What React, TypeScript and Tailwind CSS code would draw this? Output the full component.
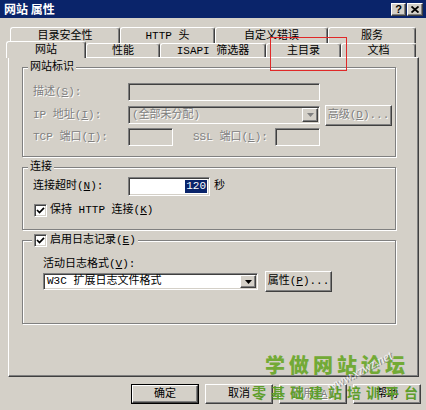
import React from "react";

const raised =
  "bg-[#d4d0c8] border border-t-white border-l-white border-r-[#404040] border-b-[#404040] shadow-[inset_-1px_-1px_0_#808080]";
const sunken =
  "border border-t-[#808080] border-l-[#808080] border-r-white border-b-white shadow-[inset_1px_1px_0_#404040,inset_-1px_-1px_0_#d4d0c8]";
const off = "text-[#808080] [text-shadow:1px_1px_0_#fff]";
const tabBase =
  "flex justify-center leading-[14px] border-t border-l border-r border-t-white border-l-white border-r-[#404040] rounded-t-[3px] shadow-[inset_-1px_0_0_#808080] whitespace-nowrap";
const group =
  "ml-[13px] w-[374px] p-0 border border-[#808080] shadow-[inset_1px_1px_0_#fff,1px_1px_0_#fff]";

function K({ k }: { k: string }) {
  return (
    <>
      (<span className="underline underline-offset-[1px]">{k}</span>)
    </>
  );
}

function Check() {
  return (
    <div className={`w-[13px] h-[13px] bg-white flex items-center justify-center shrink-0 ${sunken}`}>
      <svg width="9" height="9" viewBox="0 0 9 9">
        <path d="M1 4 L3.5 6.5 L8 1.8" fill="none" stroke="#000" strokeWidth="1.7" />
      </svg>
    </div>
  );
}

function Arrow({ disabled }: { disabled?: boolean }) {
  return (
    <div className={`w-[16px] h-full flex items-center justify-center ${raised}`}>
      <svg width="7" height="4" viewBox="0 0 7 4">
        <path d="M0 0H7L3.5 4Z" fill={disabled ? "#808080" : "#000"} />
      </svg>
    </div>
  );
}

function Btn({ children, className = "" }: { children: React.ReactNode; className?: string }) {
  return <div className={`flex items-center justify-center ${raised} ${className}`}>{children}</div>;
}

function Tab({ children, className }: { children: React.ReactNode; className: string }) {
  return <div className={`${tabBase} ${className}`}>{children}</div>;
}

export default function App() {
  return (
    <div className="relative w-[426px] h-[410px] overflow-hidden bg-[#d4d0c8] text-[11px] text-black font-['Liberation_Mono','Noto_Sans_CJK_SC',monospace]">
      {/* title bar */}
      <div className="h-[18px] bg-[#0a246a] flex items-center justify-between pl-[4px] pr-[3px]">
        <span className="text-white font-bold text-[12px] leading-[14px] font-['Noto_Sans_CJK_SC',sans-serif]">
          网站 属性
        </span>
        <div className="flex gap-[1px] mt-[1px]">
          <Btn className="w-[15px] h-[13px]">
            <span className="font-bold text-[11px] leading-[11px] font-['Liberation_Sans',sans-serif]">?</span>
          </Btn>
          <Btn className="w-[16px] h-[13px]">
            <svg width="8" height="7" viewBox="0 0 8 7">
              <path d="M0.5 0.5L7.5 6.5M7.5 0.5L0.5 6.5" stroke="#000" strokeWidth="1.8" />
            </svg>
          </Btn>
        </div>
      </div>

      {/* tabs back row */}
      <div className="flex ml-[10px] mt-[9px] h-[16px]">
        <Tab className="w-[110px] h-full pt-[1px]">目录安全性</Tab>
        <Tab className="w-[95px] h-full pt-[1px]">HTTP 头</Tab>
        <Tab className="w-[113px] h-full pt-[1px]">自定义错误</Tab>
        <Tab className="w-[88px] h-full pt-[1px]">服务</Tab>
      </div>
      {/* tabs front row */}
      <div className="flex items-start ml-[8px] h-[14px]">
        <Tab className="relative z-10 -ml-[2px] -mt-[2px] w-[80px] h-[17px] bg-[#d4d0c8] pt-[1px]">网站</Tab>
        <Tab className="w-[74px] h-[14px] items-center">性能</Tab>
        <Tab className="w-[106px] h-[14px] items-center">ISAPI 筛选器</Tab>
        <Tab className="w-[75px] h-[14px] items-center">主目录</Tab>
        <Tab className="w-[75px] h-[14px] items-center">文档</Tab>
      </div>

      {/* panel */}
      <div className="ml-[8px] w-[411px] h-[320px] border border-t-white border-l-white border-r-[#404040] border-b-[#404040] shadow-[inset_-1px_-1px_0_#808080] flex flex-col">
        {/* 网站标识 */}
        <fieldset className={`${group} mt-[2px]`}>
          <legend className="ml-[5px] px-[2px] leading-[14px] bg-[#d4d0c8]">网站标识</legend>
          <div className="pl-[10px] pt-[9px] pb-[10px] flex flex-col">
            <div className="flex items-center h-[18px]">
              <span className={`w-[95px] ${off}`}>
                描述<K k="S" />:
              </span>
              <div className={`w-[192px] h-[18px] bg-[#d4d0c8] ${sunken}`} />
            </div>
            <div className="flex items-center h-[18px] mt-[5px]">
              <span className={`w-[95px] ${off}`}>
                IP 地址<K k="I" />:
              </span>
              <div className={`w-[192px] h-[18px] bg-[#d4d0c8] p-[1px] flex ${sunken}`}>
                <span className={`flex-1 pl-[2px] leading-[14px] ${off}`}>(全部未分配)</span>
                <Arrow disabled />
              </div>
              <Btn className="ml-[5px] w-[67px] h-[21px] shrink-0">
                <span className={off}>
                  高级<K k="D" />...
                </span>
              </Btn>
            </div>
            <div className="flex items-center h-[18px] mt-[4px]">
              <span className={`w-[95px] ${off}`}>
                TCP 端口<K k="T" />:
              </span>
              <div className={`w-[45px] h-[18px] bg-[#d4d0c8] ${sunken}`} />
              <span className={`ml-[20px] w-[82px] ${off}`}>
                SSL 端口<K k="L" />:
              </span>
              <div className={`w-[45px] h-[18px] bg-[#d4d0c8] ${sunken}`} />
            </div>
          </div>
        </fieldset>

        {/* 连接 */}
        <fieldset className={`${group} mt-[3px]`}>
          <legend className="ml-[5px] px-[2px] leading-[14px] bg-[#d4d0c8]">连接</legend>
          <div className="pl-[10px] pt-[3px] pb-[12px] flex flex-col">
            <div className="flex items-center h-[19px]">
              <span className="w-[95px]">
                连接超时<K k="N" />:
              </span>
              <div className={`w-[82px] h-[19px] bg-white flex items-center justify-end pr-[2px] ${sunken}`}>
                <span className="bg-[#0a246a] text-white leading-[13px] px-[1px]">120</span>
              </div>
              <span className="ml-[4px]">秒</span>
            </div>
            <div className="flex items-center h-[14px] mt-[7px] ml-[1px] gap-[3px]">
              <Check />
              <span>
                保持 HTTP 连接<K k="K" />
              </span>
            </div>
          </div>
        </fieldset>

        {/* 启用日志记录 */}
        <fieldset className={`${group} mt-[3px]`}>
          <legend className="ml-[9px] px-[2px] leading-[14px] bg-[#d4d0c8]">
            <span className="flex items-center gap-[3px] h-[14px]">
              <Check />
              <span>
                启用日志记录<K k="E" />
              </span>
            </span>
          </legend>
          <div className="pl-[20px] pt-[10px] pb-[33px] flex flex-col">
            <span className="leading-[14px]">
              活动日志格式<K k="V" />:
            </span>
            <div className="flex items-center h-[17px] mt-[2px]">
              <div className={`w-[215px] h-[17px] bg-white p-[1px] flex ${sunken}`}>
                <span className="flex-1 pl-[2px] leading-[13px]">W3C 扩展日志文件格式</span>
                <Arrow />
              </div>
              <Btn className="ml-[7px] w-[67px] h-[21px] shrink-0">
                <span>
                  属性<K k="P" />...
                </span>
              </Btn>
            </div>
          </div>
        </fieldset>
      </div>

      {/* dialog buttons */}
      <div className="flex justify-end gap-[6px] pr-[5px] mt-[7px]">
        <div className="w-[68px] h-[20px] border border-black flex">
          <Btn className="flex-1">确定</Btn>
        </div>
        <Btn className="w-[68px] h-[20px]">取消</Btn>
        <Btn className="w-[68px] h-[20px]">
          <span className={off}>
            应用<K k="A" />
          </span>
        </Btn>
        <Btn className="w-[68px] h-[20px]">帮助</Btn>
      </div>

      {/* annotation box */}
      <div className="absolute left-[270px] top-[37px] w-[77px] h-[34px] border border-[#e02828] pointer-events-none" />

      {/* watermark */}
      <div className="absolute left-[265px] top-[353px] text-[20px] leading-[24px] font-black tracking-[4px] text-[#72aa36] font-['Noto_Sans_CJK_SC',sans-serif] whitespace-nowrap">
        学做网站论坛
      </div>
      <div className="absolute left-[328px] top-[380px] -rotate-[28deg] origin-left text-[13px] leading-[16px] italic text-[#f4f4f4] [text-shadow:1px_1px_0_#8a8a8a] font-['Liberation_Serif',serif] whitespace-nowrap">
        www.xzwz.net
      </div>
      <div className="absolute left-[252px] top-[383px] text-[14px] leading-[18px] font-bold tracking-[5px] text-[#5e9e2c] font-['Noto_Sans_CJK_SC',sans-serif] whitespace-nowrap">
        零基础建站培训平台
      </div>
    </div>
  );
}
